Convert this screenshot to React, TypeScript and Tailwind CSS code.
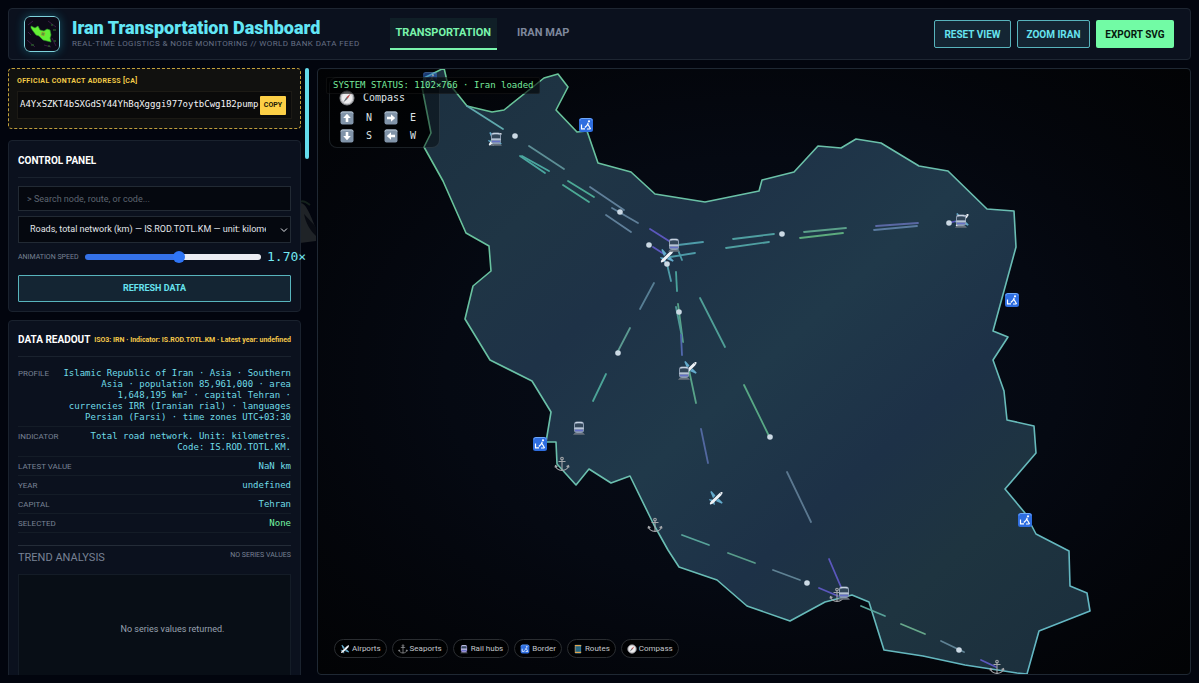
import { useState } from "react";

const outline =
  "424,78 444,68 447,81 467,106 492,112 504,110 544,78 558,74 568,87 556,110 577,132 587,131 598,163 631,172 655,194 705,202 759,191 762,180 794,172 818,146 841,148 856,139 881,143 919,166 948,171 987,209 1014,211 1016,247 993,331 1008,337 993,360 1004,391 1007,420 1034,426 1036,453 1005,489 1025,513 1036,534 1069,551 1070,586 1087,593 1090,611 1039,631 1027,674 1017,673 965,665 923,656 884,650 869,602 852,595 825,602 790,621 747,606 717,580 679,567 668,550 654,525 630,476 611,483 589,469 576,485 557,464 556,442 546,442 551,412 532,381 490,360 465,319 473,286 491,271 489,246 466,233 443,181 424,147 431,133 422,87";

const dashes: [number, number, number, number, string][] = [
  [467, 106, 503, 129, "#5fa9ad"],
  [529, 146, 564, 169, "#5d8f96"],
  [520, 156, 545, 173, "#4aa69f"],
  [522, 156, 549, 171, "#4aa69f"],
  [563, 185, 589, 202, "#4ca995"],
  [568, 181, 594, 197, "#4ca995"],
  [590, 187, 624, 210, "#5f7f99"],
  [612, 208, 638, 223, "#5f7f99"],
  [606, 215, 631, 232, "#5f7f99"],
  [650, 229, 669, 241, "#5b57bd"],
  [653, 247, 664, 254, "#5b57bd"],
  [678, 245, 703, 242, "#4e9ba8"],
  [670, 257, 695, 253, "#4e9ba8"],
  [733, 239, 774, 234, "#4f9fa1"],
  [726, 248, 769, 242, "#4f9fa1"],
  [804, 232, 846, 228, "#5ba08a"],
  [800, 238, 843, 233, "#5cab7e"],
  [876, 226, 918, 223, "#5a68a4"],
  [874, 230, 917, 226, "#5a7ba0"],
  [949, 223, 960, 220, "#5b57bd"],
  [678, 250, 682, 260, "#4e9ba8"],
  [667, 264, 671, 281, "#4e9ba8"],
  [676, 272, 677, 291, "#4aa39c"],
  [678, 304, 683, 342, "#58a389"],
  [676, 307, 682, 337, "#4f9a97"],
  [681, 335, 682, 355, "#5268ae"],
  [689, 370, 696, 403, "#58a389"],
  [701, 429, 708, 463, "#5268a0"],
  [654, 283, 640, 309, "#577e94"],
  [630, 328, 617, 353, "#5b9a91"],
  [606, 374, 593, 401, "#4ca498"],
  [700, 298, 725, 347, "#4f9f97"],
  [744, 385, 769, 436, "#58a885"],
  [787, 472, 811, 522, "#5b7890"],
  [829, 559, 841, 587, "#5b57bd"],
  [682, 535, 709, 545, "#58a39a"],
  [728, 553, 755, 563, "#589c8b"],
  [773, 570, 800, 580, "#5f8294"],
  [819, 588, 838, 596, "#5b57bd"],
  [861, 606, 885, 616, "#58a39a"],
  [901, 624, 925, 634, "#67a88b"],
  [941, 641, 964, 652, "#5f8294"],
  [981, 660, 996, 667, "#5b57bd"],
];

const dots = [
  [515, 136], [620, 212], [649, 245], [667, 264], [782, 234], [949, 223],
  [679, 312], [618, 353], [770, 437], [807, 583], [959, 650],
];

// Icons are drawn on a 16x16 grid

function Plane() {
  return (
    <g>
      <path d="M7.500 5.500L3.500 1 2.300 1.800 5 8.200zM10.500 8.500l4.200 4-.8 1.200-6.200-2.700z" fill="#63aacb" />
      <path d="M4.500 9.500L1.200 9.200 1 10l3 1.700zM6.500 11.500l.3 3.300-.8.200-1.800-3z" fill="#63aacb" />
      <path d="M2 14.200c-.4-.6 0-1.800 1-3L10.800 3.700c1.400-1.300 3.100-2 3.600-1.500s-.2 2.200-1.500 3.600L5.200 13.200c-1.200 1-2.600 1.500-3.200 1z" fill="#eef2f6" />
      <path d="M12.300 3.200l1.200 1.200" stroke="#5f7688" strokeWidth=".8" />
    </g>
  );
}

function Anchor() {
  return (
    <g fill="none" stroke="#a5a7ab" strokeWidth="1.100">
      <circle cx="8" cy="2.500" r="1.300" />
      <path d="M8 4v10.500M4.500 5.500h7M1.500 9.500c.5 3 3 4.700 6.500 5 3.500-.3 6-2 6.500-5M1 11.500l.5-2 2 1M15 11.500l-.5-2-2 1" />
    </g>
  );
}

function Train({ fill = "#8b9bb0" }: { fill?: string }) {
  return (
    <g>
      <path d="M2 14.800h12l-1.500-1.800h-9z" fill="#69727c" />
      <rect x="3" y="1.500" width="10" height="11.500" rx="3" fill={fill} />
      <path d="M4 4.200c2-1 6-1 8 0v3H4z" fill="#33475a" />
      <path d="M4.500 2.500h7M3.200 8.300h9.600" stroke="#c6d2e0" strokeWidth="1.100" />
      <path d="M4 10.500h8" stroke="#6571c6" strokeWidth="1.600" />
    </g>
  );
}

function Border() {
  return (
    <g>
      <rect x="1" y="1" width="14" height="14" rx="2.500" fill="#2f6ee0" />
      <path d="M2 3.500C2 2 3 1.500 4 1.500h8c1 0 2 .5 2 2" fill="none" stroke="#6fa8f7" />
      <path d="M3.500 7.500v4.300H7M6.800 10.500L9 8.500l1.300-2.700M10 7.500l2.600 4.500M9 12h3.500" fill="none" stroke="#fff" strokeWidth="1.200" />
      <circle cx="11" cy="4.300" r="1.100" fill="#fff" />
    </g>
  );
}

function Route() {
  return (
    <g>
      <rect x="3" y="1" width="10" height="14" rx="1" fill="#2e7794" />
      <path d="M3 2.500h10M3 13.500h10" stroke="#e3a34c" strokeWidth="2" />
      <path d="M5 5h6M5 8h6M5 11h6" stroke="#164358" />
      <path d="M3.500 4v8" stroke="#d6884c" />
    </g>
  );
}

function CompassFace() {
  return (
    <g>
      <circle cx="8" cy="8" r="7" fill="#c9c9cd" stroke="#85878b" />
      <circle cx="8" cy="8" r="5.200" fill="#ececee" />
      <path d="M11.800 3.500L7.300 7.300l1.400 1.400z" fill="#b84a4a" />
      <path d="M4.200 12.500l3.100-5.200 1.400 1.400z" fill="#666b73" />
    </g>
  );
}

function Arrow({ turn }: { turn: string }) {
  return (
    <svg viewBox="0 0 16 16" className="size-4" aria-hidden="true">
      <rect x="1.500" y="1.500" width="13" height="13" rx="2" fill="#8194a9" />
      <path d="M2 3.500c0-1 .5-1.500 1.500-1.500h9c1 0 1.500.5 1.500 1.500" fill="none" stroke="#bccad8" />
      <path d="M8 3.800L4.200 8h2.500v4h2.600V8h2.500z" fill="#fff" transform={turn} />
    </svg>
  );
}

const markers = [
  { x: 430, y: 79, kind: "border", dim: true },
  { x: 586, y: 125, kind: "border" },
  { x: 1012, y: 300, kind: "border" },
  { x: 1025, y: 520, kind: "border" },
  { x: 540, y: 444, kind: "border" },
  { x: 495, y: 139, kind: "plane" },
  { x: 496, y: 139, kind: "train" },
  { x: 667, y: 256, kind: "plane" },
  { x: 674, y: 245, kind: "train" },
  { x: 962, y: 220, kind: "plane" },
  { x: 961, y: 221, kind: "train" },
  { x: 690, y: 368, kind: "plane" },
  { x: 684, y: 373, kind: "train" },
  { x: 716, y: 498, kind: "plane" },
  { x: 579, y: 428, kind: "train" },
  { x: 562, y: 464, kind: "anchor" },
  { x: 655, y: 525, kind: "anchor" },
  { x: 837, y: 595, kind: "anchor" },
  { x: 844, y: 593, kind: "train" },
  { x: 997, y: 667, kind: "anchor" },
];

function Glyph({ kind }: { kind: string }) {
  if (kind === "plane") return <Plane />;
  if (kind === "anchor") return <Anchor />;
  if (kind === "train") return <Train />;
  if (kind === "rail") return <Train fill="#9c8fd0" />;
  if (kind === "border") return <Border />;
  if (kind === "route") return <Route />;
  return <CompassFace />;
}

const legend = [
  { kind: "plane", text: "Airports" },
  { kind: "anchor", text: "Seaports" },
  { kind: "rail", text: "Rail hubs" },
  { kind: "border", text: "Border" },
  { kind: "route", text: "Routes" },
  { kind: "compass", text: "Compass" },
];

const readout = [
  {
    label: "PROFILE",
    value:
      "Islamic Republic of Iran · Asia · Southern Asia · population 85,961,000 · area 1,648,195 km² · capital Tehran · currencies IRR (Iranian rial) · languages Persian (Farsi) · time zones UTC+03:30",
  },
  { label: "INDICATOR", value: "Total road network. Unit: kilometres. Code: IS.ROD.TOTL.KM." },
  { label: "LATEST VALUE", value: "NaN km" },
  { label: "YEAR", value: "undefined" },
  { label: "CAPITAL", value: "Tehran" },
  { label: "SELECTED", value: "None", green: true },
];

function Header() {
  return (
    <header className="flex items-center rounded-sm border border-[#1e2632] bg-[#0b111e] py-[7px] pr-4 pl-[15px]">
      <svg viewBox="0 0 36 36" className="size-9 shrink-0 rounded-md shadow-[0_0_10px_#22d3ee55]" aria-hidden="true">
        <rect x=".5" y=".5" width="35" height="35" rx="5.500" fill="#0c0a17" stroke="#7fd3dc" />
        <path d="M3 24l8 7M4 9l5-4M24 5l8 6M28 22l4 8M20 29l7 2M4 16l3 3" stroke="#3b1e46" />
        <path d="M27 9h2M29 14h3M7 29h3M30 25h2M24 30h2" stroke="#2f7a2b" />
        <path
          d="M7 10l2 1 2 1 3-2 2 4 4 1 3-2 3 1 1 5-1 3 1 4-4-1-4-1-4-4-3-1-3-4-2-3z"
          fill="#65ef35"
          stroke="#2b9d2c"
          strokeWidth=".6"
        />
        <path d="M18 16l3 1-1 3-3-1z" fill="#4ba238" stroke="#c8932f" strokeWidth=".5" />
      </svg>

      <div className="ml-3">
        <h1 className="text-[18px] font-black leading-5 text-[#62e6f5]">Iran Transportation Dashboard</h1>
        <p className="text-[8px] leading-3 tracking-wider text-[#667085]">
          REAL-TIME LOGISTICS &amp; NODE MONITORING // WORLD BANK DATA FEED
        </p>
      </div>

      <nav className="ml-[30px] flex gap-2 text-[11px] font-bold leading-4">
        <a href="#transportation" className="border-b-2 border-[#79f5ac] bg-[#101f27] px-[6px] py-[7px] text-[#79f5ac]">
          TRANSPORTATION
        </a>
        <a href="#map" className="border-b-2 border-transparent px-3 py-[7px] text-[#7e879c]">
          IRAN MAP
        </a>
      </nav>

      <div className="ml-auto flex gap-[6px] text-[10px] font-bold">
        <button className="h-7 w-[77px] rounded-[2px] border border-[#58b4bd] bg-[#142533] text-[#67e3ef]">RESET VIEW</button>
        <button className="h-7 w-[73px] rounded-[2px] border border-[#58b4bd] bg-[#142533] text-[#67e3ef]">ZOOM IRAN</button>
        <button className="h-7 w-[78px] rounded-[2px] bg-[#72fba5] text-[#06190f]">EXPORT SVG</button>
      </div>
    </header>
  );
}

function ControlPanel() {
  const [speed, setSpeed] = useState(1.7);
  const filled = ((speed - 0.2) / 2.8) * 100;

  return (
    <section className="rounded-sm border border-[#1a222e] bg-[#0b111e] p-[9px]">
      <h2 className="border-b border-[#1a222e] pt-[2px] pb-2 text-[10px] font-bold leading-[17px] text-white">
        CONTROL PANEL
      </h2>

      <input
        aria-label="Search"
        placeholder="> Search node, route, or code..."
        className="mt-2 block h-[25px] w-full border border-[#222a34] bg-[#05080f] px-2 text-[9px] text-gray-200 placeholder:text-[#5d6570]"
      />

      <div className="relative mt-[5px]">
        <select
          aria-label="Indicator"
          className="block h-[27px] w-full appearance-none overflow-hidden border border-[#222a34] bg-[#05080f] pr-6 pl-[11px] text-[9px] text-[#e2e5ea]"
        >
          <option>Roads, total network (km) — IS.ROD.TOTL.KM — unit: kilometres</option>
        </select>
        <svg viewBox="0 0 8 8" className="pointer-events-none absolute top-[10px] right-[3px] size-2" fill="none" stroke="#e2e5ea">
          <path d="M1 2.500l3 3 3-3" />
        </svg>
      </div>

      <div className="mt-1 flex h-5 items-center">
        <label htmlFor="speed" className="w-[67px] shrink-0 whitespace-nowrap text-[7px] text-[#788294]">
          ANIMATION SPEED
        </label>
        <input
          id="speed"
          type="range"
          min="0.2"
          max="3"
          step="0.1"
          value={speed}
          onChange={(e) => setSpeed(Number(e.target.value))}
          style={{ backgroundImage: `linear-gradient(to right, #3471e8 ${filled}%, #ebecf2 ${filled}%)` }}
          className="h-[6px] w-44 shrink-0 appearance-none rounded-full [&::-webkit-slider-thumb]:size-3 [&::-webkit-slider-thumb]:appearance-none [&::-webkit-slider-thumb]:rounded-full [&::-webkit-slider-thumb]:bg-[#2f75f6]"
        />
        <output htmlFor="speed" className="relative z-10 ml-[6px] font-['DejaVu_Sans_Mono',monospace] text-[13px] text-[#72e8f2]">
          {speed.toFixed(2)}×
        </output>
      </div>

      <button className="mt-2 block h-[27px] w-full rounded-[1px] border border-[#58b4bd] bg-[#142533] text-[9px] font-bold text-[#67e3ef]">
        REFRESH DATA
      </button>
    </section>
  );
}

function DataReadout() {
  return (
    <section className="min-h-[380px] rounded-sm border border-[#1a222e] bg-[#0b111e] p-[9px]">
      <div className="flex items-center justify-between border-b border-[#1a222e] pt-[2px] pb-2 font-bold">
        <h2 className="whitespace-nowrap text-[10px] leading-4 text-white">DATA READOUT</h2>
        <p className="whitespace-nowrap text-[7px] text-[#f4c84a]">
          ISO3: IRN · Indicator: IS.ROD.TOTL.KM · Latest year: undefined
        </p>
      </div>

      <dl className="mt-[7px]">
        {readout.map((row) => (
          <div key={row.label} className="flex justify-between border-b border-[#141c27] pt-1 pb-[3px] leading-[11px]">
            <dt className="text-[8px] text-[#788294]">{row.label}</dt>
            <dd
              className={`max-w-[230px] text-right font-['DejaVu_Sans_Mono',monospace] text-[9px] ${
                row.green ? "text-[#76f4a3]" : "text-[#70dce8]"
              }`}
            >
              {row.value}
            </dd>
          </div>
        ))}
      </dl>

      <div className="mt-3 flex items-start justify-between border-t border-[#242c38] pt-1 text-[#788294]">
        <h3 className="text-[11px] leading-4">TREND ANALYSIS</h3>
        <span className="text-[7px] leading-[11px]">NO SERIES VALUES</span>
      </div>

      <div className="mt-2 h-28 border border-[#141c27] bg-[#080e16] pt-12 pl-9 text-center text-[9px] text-[#98a1b0]">
        No series values returned.
      </div>
    </section>
  );
}

function MapView() {
  return (
    <main className="relative min-w-0 overflow-hidden rounded-sm border border-[#1f2833] bg-radial from-[#080d19] via-[#050912] to-[#020305]">
      <svg viewBox="318 69 872 605" preserveAspectRatio="xMidYMid slice" className="absolute inset-0 size-full" role="img" aria-label="Iran transport map">
        <defs>
          <linearGradient id="land" x1="0" y1="0" x2="1" y2="1">
            <stop offset="0" stopColor="#1c3040" />
            <stop offset=".2" stopColor="#1f3545" />
            <stop offset=".33" stopColor="#1e3247" />
            <stop offset=".5" stopColor="#20394a" />
            <stop offset=".66" stopColor="#1d3147" />
            <stop offset=".8" stopColor="#1e3440" />
            <stop offset="1" stopColor="#1b2e3c" />
          </linearGradient>
          <linearGradient id="edge" x1="0" y1="0" x2="1" y2="1">
            <stop offset="0" stopColor="#67c493" />
            <stop offset=".5" stopColor="#6bbfb0" />
            <stop offset="1" stopColor="#62b5c5" />
          </linearGradient>
        </defs>

        <polygon points={outline} fill="url(#land)" stroke="url(#edge)" strokeWidth="1.600" strokeLinejoin="round" />

        {dashes.map(([x1, y1, x2, y2, color]) => (
          <line key={`${x1}-${y1}`} x1={x1} y1={y1} x2={x2} y2={y2} stroke={color} strokeWidth="1.800" strokeLinecap="round" />
        ))}

        {markers.map((m) => (
          <g key={`${m.x}-${m.y}`} transform={`translate(${m.x - 8} ${m.y - 8})`} opacity={m.dim ? 0.5 : 1}>
            <Glyph kind={m.kind} />
          </g>
        ))}

        {dots.map(([x, y]) => (
          <circle key={`${x}-${y}`} cx={x} cy={y} r="2.800" fill="#cbd9e4" />
        ))}
      </svg>

      {/* Compass card */}
      <div className="absolute top-2 left-[11px] w-[111px] rounded-lg border border-[#7e97a533] bg-black/40 px-[9px] pt-[11px] pb-[2px] font-['DejaVu_Sans_Mono',monospace] text-[10px] leading-[18px] text-[#dde1e5]">
        <div className="flex items-center gap-2">
          <svg viewBox="0 0 16 16" className="size-4" aria-hidden="true">
            <CompassFace />
          </svg>
          Compass
        </div>
        <div className="mt-[2px] grid grid-cols-[16px_20px_16px_20px] items-center gap-x-1">
          <Arrow turn="" />
          <span className="text-center">N</span>
          <Arrow turn="rotate(90 8 8)" />
          <span className="text-center">E</span>
          <Arrow turn="rotate(180 8 8)" />
          <span className="text-center">S</span>
          <Arrow turn="rotate(-90 8 8)" />
          <span className="text-center">W</span>
        </div>
      </div>

      <p className="absolute top-2 left-2 rounded-[2px] border border-white/5 bg-black/60 px-[6px] font-['DejaVu_Sans_Mono',monospace] text-[9px] leading-[15px] text-[#76e99c]">
        SYSTEM STATUS: 1102×766 · Iran loaded
      </p>

      <ul className="absolute bottom-4 left-4 flex gap-[5px]">
        {legend.map((item) => (
          <li key={item.text} className="flex h-[19px] items-center gap-[2px] rounded-full border border-[#2a2d31] bg-black/70 px-[5px] text-[8px] text-[#c3c7cc]">
            <svg viewBox="0 0 16 16" className="size-[10px]" aria-hidden="true">
              <Glyph kind={item.kind} />
            </svg>
            {item.text}
          </li>
        ))}
      </ul>
    </main>
  );
}

export default function App() {
  return (
    <div className="relative flex h-screen flex-col gap-2 overflow-hidden bg-[#02050e] p-2 font-[Roboto,sans-serif]">
      {/* faint artwork behind the panels */}
      <svg viewBox="0 0 20 60" className="absolute top-[190px] left-[300px] h-[60px] w-5" aria-hidden="true">
        <path d="M0 13c5-1 9 8 16 26v12L0 53z" fill="#1f2327" />
        <path d="M4 24l12 13v9C10 40 6 34 4 24z" fill="#080b12" />
        <path d="M0 12c3-2 6 0 10 3" fill="none" stroke="#14211c" strokeWidth="2" />
      </svg>

      <Header />

      <div className="relative grid min-h-0 flex-1 grid-cols-[301px_1fr] gap-2">
        <div className="flex min-h-0 justify-between overflow-hidden">
          <aside className="w-[293px]">
            <section className="mb-[11px] rounded-sm border border-dashed border-[#c19f3c] bg-[#11110f] p-2 pb-[9px]">
              <h2 className="text-[7px] font-bold leading-[9px] tracking-wider text-[#f2cb48]">OFFICIAL CONTACT ADDRESS [CA]</h2>
              <div className="mt-[5px] flex h-7 items-center justify-between border border-[#1c1a15] bg-[#0a0a0a] pr-[5px] pl-[2px]">
                <code className="font-['DejaVu_Sans_Mono',monospace] text-[9px] text-[#f3f4f6]">
                  A4YxSZKT4bSXGdSY44YhBqXgggi977oytbCwg1B2pump
                </code>
                <button className="h-[19px] w-[26px] shrink-0 rounded-[1px] bg-[#fccf46] text-[7px] font-bold text-[#1d1907]">
                  COPY
                </button>
              </div>
            </section>

            <div className="flex flex-col gap-2">
              <ControlPanel />
              <DataReadout />
            </div>
          </aside>
          <div className="h-[91px] w-1 rounded-full bg-[#63dcec]" />
        </div>

        <MapView />
      </div>
    </div>
  );
}
